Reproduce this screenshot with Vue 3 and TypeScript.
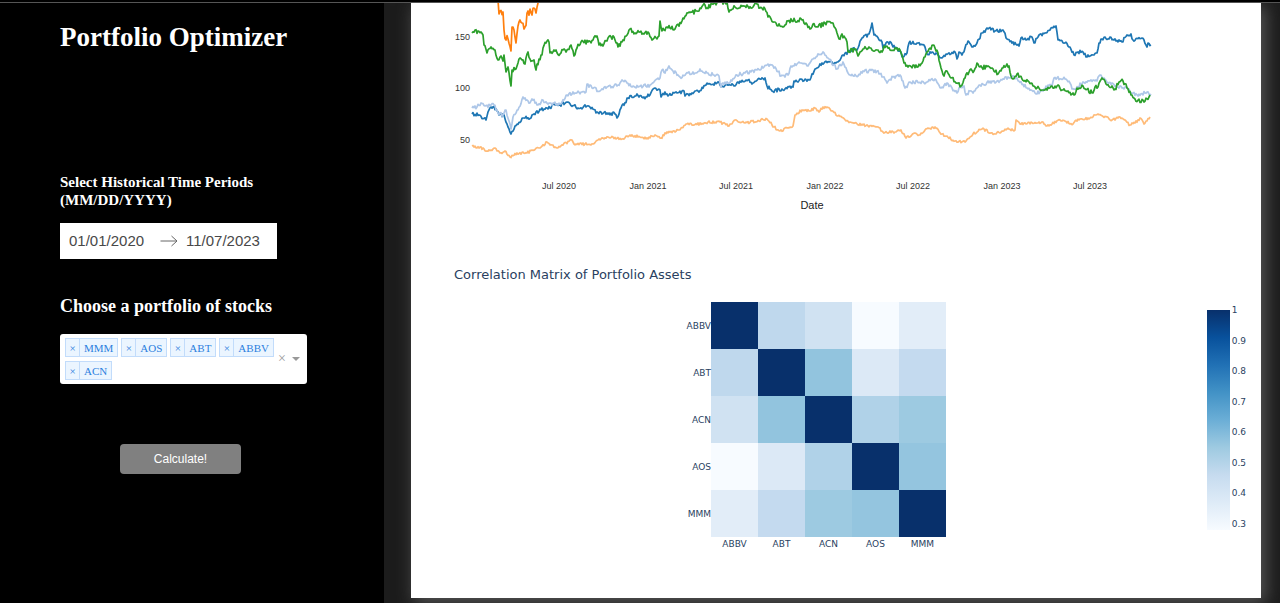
<script setup lang="ts">
import { computed, ref } from 'vue'

interface Trace {
  name: string
  color: string
  noise: number
  points: string
}

const startDate = ref('01/01/2020')
const endDate = ref('11/07/2023')
const stocks = ref<string[]>(['MMM', 'AOS', 'ABT', 'ABBV', 'ACN'])

function removeStock(name: string): void {
  stocks.value = stocks.value.filter((s) => s !== name)
}

const traces: Trace[] = [
  {
    name: 'ABBV',
    color: '#1f77b4',
    noise: 1.8,
    points:
      '472,114 479,115 486,120 488,112 491,107 496,109 499,115 504,115 508,127 511,134 515,126 523,118 531,118 536,112 547,108 555,105 560,105 567,102 578,108 587,106 597,112 607,113 615,114 617,118 621,108 628,98 637,94 639,97 647,97 655,88 660,90 661,97 665,92 669,95 677,93 684,91 685,96 692,93 698,91 708,84 717,83 722,86 730,85 735,86 738,82 748,80 753,83 758,79 765,78 767,86 772,91 782,89 793,87 794,81 809,80 815,69 822,63 832,62 836,63 843,55 852,50 858,48 862,38 869,34 872,23 874,35 882,42 883,48 888,42 897,48 903,57 907,53 909,43 918,43 925,47 927,54 932,52 938,55 942,58 946,54 955,52 957,59 959,52 962,55 968,41 972,47 977,43 982,33 989,28 995,31 1003,30 1007,39 1012,43 1019,46 1021,38 1026,40 1032,37 1034,43 1038,37 1050,30 1056,26 1058,40 1065,43 1070,47 1074,55 1078,52 1083,52 1087,57 1097,53 1099,43 1102,39 1110,37 1116,41 1122,42 1127,35 1131,34 1133,40 1142,38 1147,47 1148,43 1151,45'
  },
  {
    name: 'ABT',
    color: '#aec7e8',
    noise: 1.8,
    points:
      '472,108 477,107 481,103 485,106 494,105 498,113 503,115 506,110 511,129 513,117 518,110 523,97 527,100 530,103 532,99 538,105 543,100 548,104 560,104 564,100 567,95 575,93 586,92 587,84 592,88 600,91 607,87 618,85 622,80 627,83 632,87 638,87 650,85 660,78 662,70 665,73 669,66 673,71 680,77 688,73 695,73 700,69 707,73 719,76 721,87 723,83 732,81 737,75 745,73 757,70 768,64 775,67 781,76 788,75 791,66 800,63 808,66 813,59 823,52 828,58 837,69 843,62 848,73 858,76 863,71 877,71 883,77 887,83 893,77 900,75 905,88 910,82 927,82 935,79 941,88 947,83 957,93 960,87 964,86 966,95 970,91 973,93 978,87 992,81 995,83 1002,80 1008,77 1017,78 1027,88 1035,93 1043,91 1046,86 1052,86 1054,78 1065,79 1070,83 1072,89 1078,87 1083,82 1097,81 1100,75 1107,82 1117,87 1125,87 1133,93 1138,96 1145,93 1151,94'
  },
  {
    name: 'ACN',
    color: '#ff7f0e',
    noise: 4,
    points:
      '498,0 499,14 503,12 504,30 506,40 508,39 511,51 512,27 514,30 516,43 518,26 520,20 522,23 525,27 528,11 532,15 534,8 536,13 539,0'
  },
  {
    name: 'AOS',
    color: '#ffbb78',
    noise: 1.3,
    points:
      '472,146 480,147 487,151 495,148 500,153 505,151 510,157 517,153 527,153 532,150 540,148 547,142 557,148 572,140 574,144 593,144 598,140 608,137 622,139 630,135 640,137 647,138 655,135 661,138 667,132 675,132 687,124 703,124 708,122 720,122 729,126 735,120 745,123 767,119 774,127 780,131 793,126 795,115 802,110 810,111 815,108 819,112 823,107 830,109 838,116 850,122 863,125 878,127 883,132 895,132 901,130 906,138 915,133 920,135 925,130 935,127 942,134 955,141 965,142 973,134 982,129 995,134 1007,129 1015,130 1016,120 1020,124 1037,123 1043,122 1047,126 1060,120 1073,124 1075,121 1090,118 1098,114 1112,120 1120,117 1130,125 1135,123 1140,118 1144,124 1150,117'
  },
  {
    name: 'MMM',
    color: '#2ca02c',
    noise: 2.2,
    points:
      '472,33 478,31 483,35 484,45 487,53 491,47 495,50 498,60 501,56 503,61 504,55 506,72 508,67 511,86 512,70 516,69 519,59 522,60 525,64 528,52 530,59 534,60 536,70 539,59 542,55 543,48 547,41 549,42 550,53 554,50 560,54 563,50 566,52 571,45 574,56 577,48 581,42 588,42 593,40 597,36 599,45 603,46 608,38 614,37 618,47 622,42 630,29 635,33 640,32 648,32 652,40 659,36 660,21 662,31 667,27 675,29 682,21 688,13 697,11 705,5 707,8 712,4 720,2 727,2 729,12 735,7 745,6 753,7 757,4 760,8 765,9 768,17 774,22 780,26 785,25 788,21 802,20 806,23 810,29 813,24 818,27 825,23 833,23 837,33 839,39 842,34 847,42 848,52 855,49 858,56 863,49 870,48 877,50 882,52 884,46 890,50 895,48 900,50 904,63 908,67 918,67 923,61 927,52 933,45 938,53 941,68 944,76 947,71 951,78 957,83 961,86 965,78 971,69 974,71 977,63 980,67 992,68 998,74 1003,68 1007,64 1009,66 1011,76 1013,79 1017,74 1022,79 1028,81 1035,87 1042,90 1052,86 1057,86 1062,90 1068,91 1074,95 1077,88 1083,86 1092,93 1095,87 1098,87 1102,78 1106,84 1115,89 1119,82 1123,81 1127,88 1135,99 1144,102 1150,95'
  }
]

/* Turns the key prices of a trace into a line with small daily moves between them. */
function toPath(trace: Trace, seed: number): string {
  let state = seed * 7919 + 17
  const random = (): number => {
    state = (state * 16807) % 2147483647
    return state / 2147483647 - 0.5
  }
  const keys = trace.points.split(' ').map((p) => p.split(',').map(Number))
  const out: string[] = []
  keys.forEach(([x, y], i) => {
    out.push(`${x},${y}`)
    const next = keys[i + 1]
    if (!next) return
    const steps = Math.max(1, Math.round(next[0] - x))
    for (let s = 1; s < steps; s++) {
      const t = s / steps
      const px = x + (next[0] - x) * t
      const py = y + (next[1] - y) * t + random() * 2 * trace.noise
      out.push(`${px.toFixed(1)},${py.toFixed(1)}`)
    }
  })
  return 'M' + out.join('L')
}

const paths = computed(() =>
  traces.map((t, i) => ({ name: t.name, color: t.color, d: toPath(t, i + 1) }))
)

const xTicks = [
  { x: 559, label: 'Jul 2020' },
  { x: 648, label: 'Jan 2021' },
  { x: 736, label: 'Jul 2021' },
  { x: 825, label: 'Jan 2022' },
  { x: 913, label: 'Jul 2022' },
  { x: 1002, label: 'Jan 2023' },
  { x: 1090, label: 'Jul 2023' }
]
const yTicks = [
  { y: 40, label: '150' },
  { y: 91, label: '100' },
  { y: 143, label: '50' }
]

const assets = ['ABBV', 'ABT', 'ACN', 'AOS', 'MMM']
const heat: string[][] = [
  ['#08306b', '#bfd8ed', '#d0e2f2', '#f7fbff', '#e2edf8'],
  ['#bfd8ed', '#08306b', '#92c4de', '#dce9f6', '#c4daef'],
  ['#d0e2f2', '#92c4de', '#08306b', '#b0d2e8', '#9dcae1'],
  ['#f7fbff', '#dce9f6', '#b0d2e8', '#08306b', '#94c5df'],
  ['#e2edf8', '#c4daef', '#9dcae1', '#94c5df', '#08306b']
]
const scale = ['1', '0.9', '0.8', '0.7', '0.6', '0.5', '0.4', '0.3']
</script>

<template>
  <div class="page">
    <aside class="sidebar">
      <h1>Portfolio Optimizer</h1>

      <h2 id="period-label" class="period-label">Select Historical Time Periods (MM/DD/YYYY)</h2>
      <div class="dates" role="group" aria-labelledby="period-label">
        <input v-model="startDate" type="text" aria-label="Start date" />
        <svg class="arrow" viewBox="0 0 18 12" aria-hidden="true">
          <path d="M0.5 6H17M11.5 1L17 6L11.5 11" />
        </svg>
        <input v-model="endDate" type="text" aria-label="End date" />
      </div>

      <h2 id="stocks-label" class="stocks-label">Choose a portfolio of stocks</h2>
      <div class="select" role="group" aria-labelledby="stocks-label">
        <ul class="tags">
          <li v-for="s in stocks" :key="s" class="tag">
            <button type="button" :aria-label="'Remove ' + s" @click="removeStock(s)">×</button>
            <span>{{ s }}</span>
          </li>
        </ul>
        <button class="clear" type="button" aria-label="Clear all" @click="stocks = []">×</button>
        <button class="open" type="button" aria-label="Show options"></button>
      </div>

      <button class="calculate" type="button">Calculate!</button>
    </aside>

    <main class="main">
      <div class="card">
        <svg class="prices" viewBox="411 3 850 213" role="img" aria-label="Stock prices by date">
          <path v-for="p in paths" :key="p.name" :d="p.d" :stroke="p.color" />
          <text v-for="t in yTicks" :key="t.label" :x="470" :y="t.y" text-anchor="end">{{ t.label }}</text>
          <text v-for="t in xTicks" :key="t.label" :x="t.x" y="189" text-anchor="middle">{{ t.label }}</text>
          <text class="axis" x="812" y="209" text-anchor="middle">Date</text>
        </svg>

        <section class="correlation">
          <h3>Correlation Matrix of Portfolio Assets</h3>
          <div class="plot">
            <table>
              <tbody>
                <tr v-for="(row, r) in heat" :key="assets[r]">
                  <th scope="row">{{ assets[r] }}</th>
                  <td v-for="(c, i) in row" :key="i" :style="{ backgroundColor: c }"></td>
                </tr>
              </tbody>
              <tfoot>
                <tr>
                  <td></td>
                  <th v-for="a in assets" :key="a" scope="col">{{ a }}</th>
                </tr>
              </tfoot>
            </table>
            <div class="scale">
              <div class="bar"></div>
              <ol>
                <li v-for="n in scale" :key="n">{{ n }}</li>
              </ol>
            </div>
          </div>
        </section>
      </div>
    </main>
  </div>
</template>

<style>
body {
  margin: 0;
  background: #000;
}
</style>

<style scoped>
* {
  box-sizing: border-box;
}
.page {
  display: flex;
  min-height: 100vh;
  padding-top: 2px;
  background: #000;
  font-family: 'Liberation Serif', 'Times New Roman', serif;
}
.sidebar {
  width: 30%;
  padding: 18px 60px 0;
  border-top: 1px solid #555;
  color: #fff;
}
h1,
h2,
h3,
ul,
ol {
  margin: 0;
  padding: 0;
  list-style: none;
}
h1 {
  font-size: 27px;
  line-height: 32px;
  white-space: nowrap;
}
.period-label {
  max-width: 220px;
  margin-top: 120px;
  font-size: 15px;
  line-height: 18px;
}
.dates {
  display: flex;
  align-items: center;
  width: 217px;
  height: 36px;
  margin-top: 14px;
  padding-left: 9px;
  background: #fff;
}
.dates input {
  width: 91px;
  padding: 0;
  border: 0;
  outline: 0;
  background: transparent;
  color: #484848;
  font: 15px/24px 'Liberation Sans', Arial, sans-serif;
}
.dates input + .arrow + input {
  width: 80px;
}
.arrow {
  width: 18px;
  height: 12px;
  margin-right: 8px;
  fill: none;
  stroke: #666;
  stroke-width: 1;
}
.stocks-label {
  margin-top: 35px;
  font-size: 18px;
  line-height: 24px;
  white-space: nowrap;
}
.select {
  display: flex;
  align-items: center;
  width: 247px;
  margin-top: 16px;
  padding: 4px 7px 4px 5px;
  border-radius: 3px;
  background: #fff;
}
.tags {
  display: flex;
  flex: 1;
  flex-wrap: wrap;
  gap: 4px 3px;
}
.tag {
  display: flex;
  height: 19px;
  border: 1px solid #c2dcfb;
  background: #ebf5ff;
  color: #2b7fde;
  font-size: 11px;
  line-height: 18px;
}
.tag span {
  padding: 0 4px;
}
.tag button {
  width: 14px;
  padding: 0;
  border: 0;
  border-right: 1px solid #c2dcfb;
  background: transparent;
  color: inherit;
  font: inherit;
  line-height: 16px;
}
.clear {
  width: 12px;
  padding: 0;
  border: 0;
  background: transparent;
  color: #999;
  font: 14px/16px 'Liberation Serif', serif;
}
.open {
  width: 0;
  height: 0;
  margin-left: 4px;
  padding: 0;
  border: 4px solid transparent;
  border-top-color: #999;
  border-bottom: 0;
  background: transparent;
}
.calculate {
  display: block;
  width: 121px;
  height: 30px;
  margin: 60px 0 0 60px;
  padding: 0;
  border: 0;
  border-radius: 4px;
  background: #808080;
  color: #fff;
  font: 12px/30px 'Liberation Sans', Arial, sans-serif;
}
.main {
  display: flex;
  flex: 1;
  min-width: 0;
  padding: 0 19px 5px 27px;
  overflow: hidden;
  border-top: 1px solid #555;
  background: #1c1c1c;
}
.card {
  flex: 1;
  min-width: 0;
  background: #fff;
  box-shadow: 4px 4px 16px 1px #555;
}
.prices {
  display: block;
  width: 100%;
  height: auto;
}
.prices path {
  fill: none;
  stroke-width: 1.7;
  stroke-linejoin: round;
}
.prices text {
  fill: #333;
  font: 9px 'Liberation Sans', Arial, sans-serif;
}
.prices .axis {
  fill: #222;
  font-size: 11px;
}
.correlation {
  padding: 48px 15px 44px 0;
  color: #2a3f5f;
  font-family: 'DejaVu Sans', Verdana, sans-serif;
}
h3 {
  padding-left: 43px;
  font-size: 13px;
  font-weight: 400;
  line-height: 22px;
}
.plot {
  display: grid;
  grid-template-columns: 1fr auto 1fr;
  margin-top: 16px;
}
table {
  grid-column: 2;
  margin-right: 47px;
  border-collapse: collapse;
  font-size: 9px;
  line-height: 14px;
}
th,
td {
  width: 47px;
  padding: 0;
  font-weight: 400;
}
tbody td,
tbody th {
  height: 47px;
}
tbody th {
  text-align: right;
}
tfoot th {
  text-align: center;
}
.scale {
  display: flex;
  justify-self: end;
  gap: 2px;
  height: 220px;
  margin-top: 8px;
}
.bar {
  width: 23px;
  background: linear-gradient(
    #08306b,
    #08519c 12.5%,
    #2171b5 25%,
    #4292c6 37.5%,
    #6baed6 50%,
    #9ecae1 62.5%,
    #c6dbef 75%,
    #deebf7 87.5%,
    #f7fbff
  );
}
.scale ol {
  display: flex;
  flex-direction: column;
  justify-content: space-between;
  height: 228px;
  margin-top: -7px;
  font-size: 9px;
  line-height: 14px;
}
</style>
